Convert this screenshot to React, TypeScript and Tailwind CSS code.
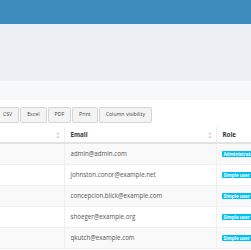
import React from 'react';

const users = [
  { email: 'admin@admin.com', role: 'Administrator' },
  { email: 'johnston.conor@example.net', role: 'Simple user' },
  { email: 'concepcion.blick@example.com', role: 'Simple user' },
  { email: 'shoeger@example.org', role: 'Simple user' },
  { email: 'qkutch@example.com', role: 'Simple user' },
];

const buttons = ['CSV', 'Excel', 'PDF', 'Print', 'Column visibility'];

const SortIcon = () => (
  <svg width="4" height="7" viewBox="0 0 4 7" className="absolute right-[4px] top-[5px]">
    <path d="M2 0 L4 2.5 H0 Z" fill="#d6d6d6" />
    <path d="M2 7 L4 4.5 H0 Z" fill="#d6d6d6" />
  </svg>
);

const App: React.FC = () => {
  return (
    <div className="w-[251px] h-[250px] overflow-hidden bg-white text-[#333]" style={{ fontFamily: '"Open Sans", "Liberation Sans", sans-serif' }}>
      {/* Top bar */}
      <div className="h-[24px] bg-[#3c8dbc]" />
      {/* Content header */}
      <div className="h-[56px] bg-[#ecf0f5]" />
      {/* Box header */}
      <div className="h-[20px] bg-[#f7f8fa] border-t border-[#eef0f3]" />

      {/* Box body */}
      <div className="pt-[7px]">
        <div className="flex gap-[1px] ml-[-4px]">
          {buttons.map(b => (
            <div
              key={b}
              className="h-[16px] px-[6px] flex items-center bg-[#f4f4f4] border border-[#d5d5d5] rounded-[2px] text-[5.2px] leading-none text-[#444]"
            >
              {b}
            </div>
          ))}
        </div>

        <table className="mt-[4px] table-fixed border-collapse w-[320px] text-[6.2px] leading-[8px]">
          <colgroup>
            <col className="w-[64px]" />
            <col className="w-[152px]" />
            <col className="w-[104px]" />
          </colgroup>
          <thead>
            <tr className="h-[16px] border-b-2 border-[#e2e2e2]">
              <th className="relative border-r border-[#f0f0f0]"><SortIcon /></th>
              <th className="relative border-r border-[#f0f0f0] text-left pl-[6px] font-bold text-[#333]">
                Email
                <SortIcon />
              </th>
              <th className="text-left pl-[6px] font-bold text-[#333]">Role</th>
            </tr>
          </thead>
          <tbody>
            {users.map((u, i) => (
              <tr key={u.email} className={`h-[21px] border-b border-[#f0f0f0] ${i % 2 === 0 ? 'bg-[#f9f9f9]' : 'bg-white'}`}>
                <td className="border-r border-[#f0f0f0]" />
                <td className="border-r border-[#f0f0f0] pl-[6px] text-[#555] whitespace-nowrap">{u.email}</td>
                <td className="pl-[5px]">
                  <span className="inline-block align-middle bg-[#00c0ef] text-white text-[4.5px] font-bold px-[2px] leading-[6px] rounded-[1px] whitespace-nowrap">
                    {u.role}
                  </span>
                </td>
              </tr>
            ))}
          </tbody>
        </table>
      </div>
    </div>
  );
};

export default App;
